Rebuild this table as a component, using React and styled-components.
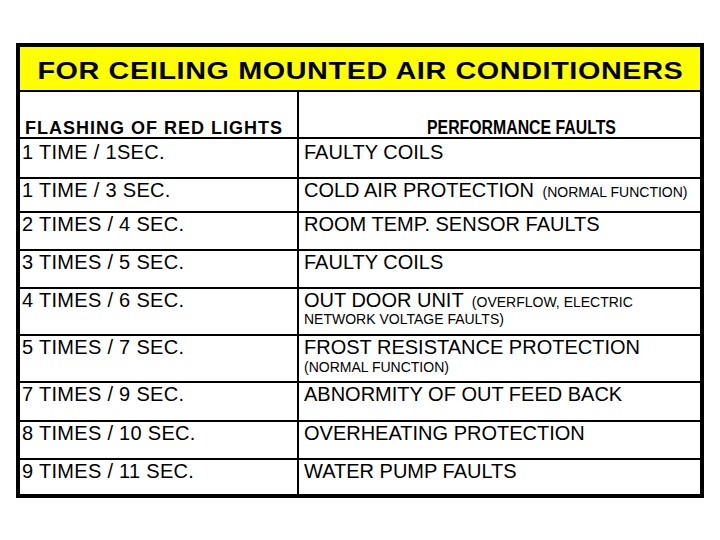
import React from 'react';
import styled, { createGlobalStyle } from 'styled-components';

const GlobalStyle = createGlobalStyle`
  html, body {
    margin: 0;
    padding: 0;
    background: #ffffff;
  }
  body {
    font-family: "Liberation Sans", Arial, sans-serif;
    color: #000000;
  }
`;

const Page = styled.div`
  width: 720px;
  height: 540px;
  padding: 43px 0 0 16px;
  box-sizing: border-box;
`;

const Table = styled.div`
  width: 688px;
  border: 4px solid #000000;
  box-sizing: border-box;
  background: #ffffff;
`;

const TitleBar = styled.div`
  height: 45px;
  padding-top: 6px;
  box-sizing: border-box;
  background: #ffff00;
  border-bottom: 2px solid #000000;
  text-align: center;
  overflow: hidden;
`;

// the slide text is stretched, so glyphs get scaled on one axis
const Stretch = styled.span`
  display: inline-block;
  white-space: nowrap;
  transform: scale(${(p) => p.$x}, ${(p) => p.$y || 1});
  transform-origin: ${(p) => p.$origin || 'center'} bottom;
`;

const TitleText = styled(Stretch)`
  font-size: 23px;
  font-weight: bold;
  line-height: 37px;
  letter-spacing: 0.5px;
`;

const Row = styled.div`
  display: grid;
  grid-template-columns: 279px 1fr;
  height: ${(p) => p.$h + (p.$last ? 0 : 2)}px;
  box-sizing: border-box;
  border-bottom: ${(p) => (p.$last ? 'none' : '2px solid #000000')};
`;

const LeftCell = styled.div`
  border-right: 2px solid #000000;
  padding: ${(p) => p.$top || 0}px 0 0 2px;
  font-size: 20px;
  line-height: 22px;
  letter-spacing: 0.3px;
  white-space: nowrap;
  overflow: hidden;
`;

const RightCell = styled.div`
  padding: ${(p) => p.$top || 0}px 0 0 5px;
  font-size: 20px;
  line-height: 22px;
  white-space: nowrap;
  overflow: hidden;
`;

const HeadLeft = styled.div`
  border-right: 2px solid #000000;
  display: flex;
  align-items: flex-end;
  padding-left: 5px;
  font-size: 18px;
  font-weight: bold;
  line-height: 18px;
  letter-spacing: 1px;
  white-space: nowrap;
`;

const HeadRight = styled.div`
  display: flex;
  align-items: flex-end;
  padding-left: 128px;
  font-size: 18px;
  font-weight: bold;
  line-height: 18px;
`;

const Note = styled.span`
  font-size: 14px;
  margin-left: 3px;
`;

const Sub = styled.div`
  font-size: 14px;
  line-height: 14px;
  margin-top: ${(p) => p.$gap}px;
`;

const rows = [
  { h: 38, top: 2, left: '1 TIME / 1SEC.', main: 'FAULTY COILS' },
  { h: 32, left: '1 TIME / 3 SEC.', main: 'COLD AIR PROTECTION', note: '(NORMAL FUNCTION)' },
  { h: 36, left: '2 TIMES / 4 SEC.', main: 'ROOM TEMP. SENSOR FAULTS' },
  { h: 36, left: '3 TIMES / 5 SEC.', main: 'FAULTY COILS' },
  {
    h: 45,
    left: '4 TIMES / 6 SEC.',
    main: 'OUT DOOR UNIT',
    note: '(OVERFLOW, ELECTRIC',
    sub: 'NETWORK VOLTAGE FAULTS)',
    gap: -1,
  },
  {
    h: 45,
    left: '5 TIMES / 7 SEC.',
    main: 'FROST RESISTANCE PROTECTION',
    sub: '(NORMAL FUNCTION)',
    gap: 2,
  },
  { h: 37, left: '7 TIMES / 9 SEC.', main: 'ABNORMITY OF OUT FEED BACK' },
  { h: 36, left: '8 TIMES / 10 SEC.', main: 'OVERHEATING PROTECTION' },
  { h: 34, left: '9 TIMES / 11 SEC.', main: 'WATER PUMP FAULTS' },
];

export default function App() {
  return (
    <Page>
      <GlobalStyle />
      <Table>
        <TitleBar>
          <TitleText $x={1.25}>FOR CEILING MOUNTED AIR CONDITIONERS</TitleText>
        </TitleBar>
        <Row $h={45}>
          <HeadLeft>FLASHING OF RED LIGHTS</HeadLeft>
          <HeadRight>
            <Stretch $x={0.88} $y={1.08} $origin="left">PERFORMANCE FAULTS</Stretch>
          </HeadRight>
        </Row>
        {rows.map((r, i) => (
          <Row key={i} $h={r.h} $last={i === rows.length - 1}>
            <LeftCell $top={r.top}>{r.left}</LeftCell>
            <RightCell $top={r.top}>
              <div>
                {r.main}
                {r.note && <> <Note>{r.note}</Note></>}
              </div>
              {r.sub && <Sub $gap={r.gap}>{r.sub}</Sub>}
            </RightCell>
          </Row>
        ))}
      </Table>
    </Page>
  );
}
